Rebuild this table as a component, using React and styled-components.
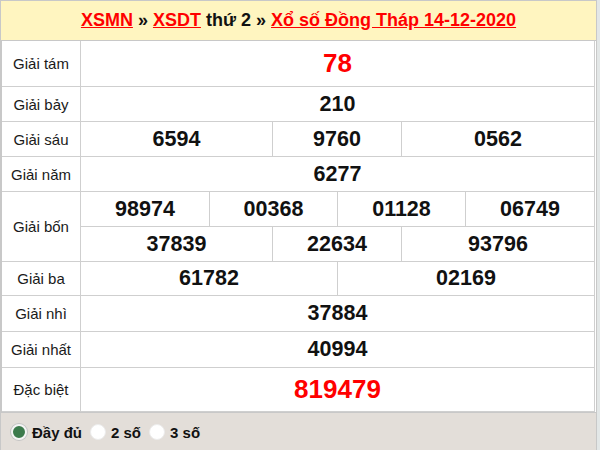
import React from 'react';
import styled, {createGlobalStyle} from 'styled-components';

const GlobalStyle = createGlobalStyle`
    body {
        margin: 0;
        background: #e3e7e7;
        font-family: "Liberation Sans", Arial, sans-serif;
    }
`;

const Wrapper = styled.div`
    width: 595px;
    border: 1px solid #c8c8c8;
    background: #fff;
`;

const Header = styled.div`
    height: 39px;
    background: #fff5c0;
    display: flex;
    align-items: center;
    justify-content: center;
    font-size: 18px;
    font-weight: bold;
    color: #111;
    white-space: pre;
`;

const Link = styled.a`
    color: #ff0000;
    text-decoration: underline;
`;

const Board = styled.div`
    display: grid;
    grid-template-columns: 79px 129px 63px 65px 64px 64px 129px;
    grid-template-rows: ${p => p.$rows};
    border-left: 1px solid #c8c8c8;
    border-top: 1px solid #c8c8c8;
    width: 594px;
`;

const Cell = styled.div`
    display: flex;
    align-items: center;
    justify-content: center;
    border-right: 1px solid #cfcfcf;
    border-bottom: 1px solid #cfcfcf;
`;

const Label = styled(Cell)`
    grid-row: span ${p => p.$rowSpan || 1};
    font-size: 15px;
    color: #1a1a1a;
`;

const Number = styled(Cell)`
    grid-column: span ${p => p.$span};
    font-size: ${p => (p.$big ? '26px' : '21.5px')};
    font-weight: bold;
    color: ${p => (p.$big ? '#ff0000' : '#111')};
`;

const Footer = styled.div`
    height: 38px;
    border-top: 1px solid #c8c8c8;
    background: #e3ded9;
    display: flex;
    align-items: center;
    padding-left: 10px;
    gap: 8px;
`;

const Option = styled.label`
    display: flex;
    align-items: center;
    gap: 5px;
    font-size: 15px;
    font-weight: bold;
    color: #111;
`;

const Radio = styled.span`
    width: 16px;
    height: 16px;
    box-sizing: border-box;
    border-radius: 50%;
    background: ${p => (p.$checked ? '#3c7a4c' : '#fff')};
    border: ${p => (p.$checked ? '2px solid #f4f4f4' : '1px solid #ececec')};
    box-shadow: ${p => (p.$checked ? '0 0 0 1px #c4c4c4' : 'none')};
`;

const prizes = [
    {label: 'Giải tám', lines: [[['78', 6]]], big: true},
    {label: 'Giải bảy', lines: [[['210', 6]]]},
    {label: 'Giải sáu', lines: [[['6594', 2], ['9760', 2], ['0562', 2]]]},
    {label: 'Giải năm', lines: [[['6277', 6]]]},
    {
        label: 'Giải bốn', lines: [
            [['98974', 1], ['00368', 2], ['01128', 2], ['06749', 1]],
            [['37839', 2], ['22634', 2], ['93796', 2]],
        ]
    },
    {label: 'Giải ba', lines: [[['61782', 3], ['02169', 3]]]},
    {label: 'Giải nhì', lines: [[['37884', 6]]]},
    {label: 'Giải nhất', lines: [[['40994', 6]]]},
    {label: 'Đặc biệt', lines: [[['819479', 6]]], big: true},
];

const rowHeights = '46px 35px 35px 35px 35px 35px 34px 36px 36px 44px';

export default function App() {
    return (
        <Wrapper>
            <GlobalStyle/>
            <Header>
                <Link>XSMN</Link>{' » '}<Link>XSDT</Link>{' thứ 2 » '}<Link>Xổ số Đồng Tháp 14-12-2020</Link>
            </Header>
            <Board $rows={rowHeights}>
                {prizes.map(prize => (
                    <React.Fragment key={prize.label}>
                        <Label $rowSpan={prize.lines.length}>{prize.label}</Label>
                        {prize.lines.flat().map(([num, span]) => (
                            <Number key={num} $span={span} $big={prize.big}>{num}</Number>
                        ))}
                    </React.Fragment>
                ))}
            </Board>
            <Footer>
                <Option><Radio $checked/>Đầy đủ</Option>
                <Option><Radio/>2 số</Option>
                <Option><Radio/>3 số</Option>
            </Footer>
        </Wrapper>
    );
}
